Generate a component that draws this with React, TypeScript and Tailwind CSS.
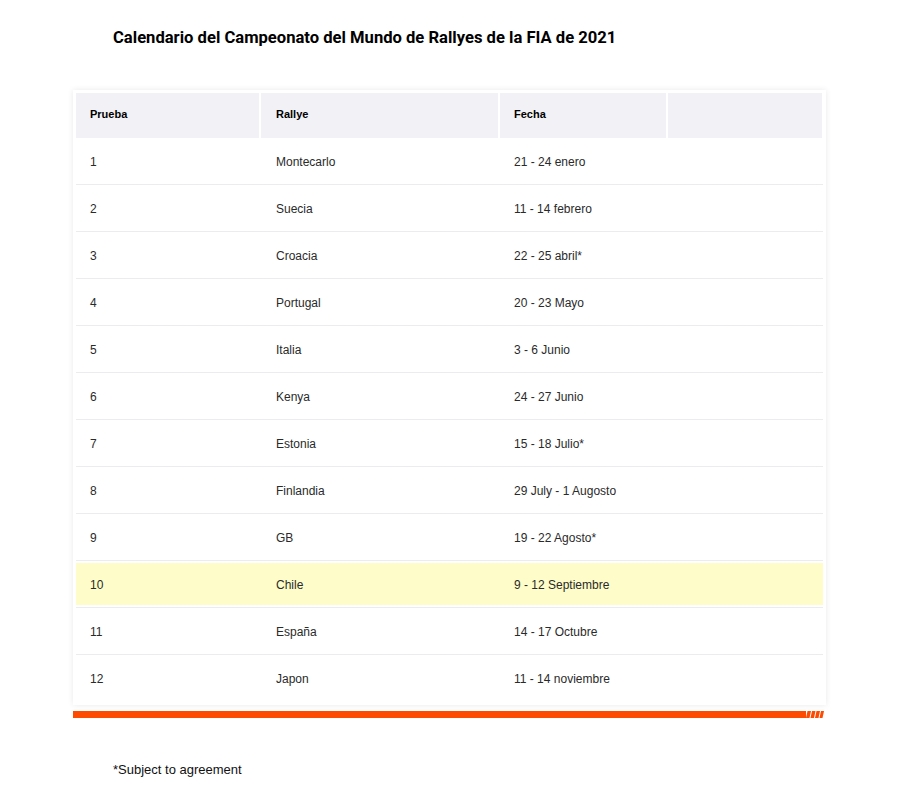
import React from 'react';

interface Row {
  prueba: string;
  rallye: string;
  fecha: string;
  highlight?: boolean;
}

const rows: Row[] = [
  { prueba: '1', rallye: 'Montecarlo', fecha: '21 - 24 enero' },
  { prueba: '2', rallye: 'Suecia', fecha: '11 - 14 febrero' },
  { prueba: '3', rallye: 'Croacia', fecha: '22 - 25 abril*' },
  { prueba: '4', rallye: 'Portugal', fecha: '20 - 23 Mayo' },
  { prueba: '5', rallye: 'Italia', fecha: '3 - 6 Junio' },
  { prueba: '6', rallye: 'Kenya', fecha: '24 - 27 Junio' },
  { prueba: '7', rallye: 'Estonia', fecha: '15 - 18 Julio*' },
  { prueba: '8', rallye: 'Finlandia', fecha: '29 July - 1 Augosto' },
  { prueba: '9', rallye: 'GB', fecha: '19 - 22 Agosto*' },
  { prueba: '10', rallye: 'Chile', fecha: '9 - 12 Septiembre', highlight: true },
  { prueba: '11', rallye: 'España', fecha: '14 - 17 Octubre' },
  { prueba: '12', rallye: 'Japon', fecha: '11 - 14 noviembre' },
];

const cols = 'grid grid-cols-[183px_237px_166px_154px] gap-x-[2px]';

const StripeBar: React.FC = () => (
  <div className="flex h-[7px] w-[751px]">
    <div className="h-full w-[733px] bg-[#fd4c02]" />
    <svg width="18" height="7" viewBox="0 0 18 7">
      <polygon points="1.5,0 5,0 3.5,7 0,7" fill="#fd4c02" />
      <polygon points="6,0 9.5,0 8,7 4.5,7" fill="#fd4c02" />
      <polygon points="10.5,0 14,0 12.5,7 9,7" fill="#fd4c02" />
      <polygon points="15,0 18,0 16.5,7 13.5,7" fill="#fd4c02" />
    </svg>
  </div>
);

const App: React.FC = () => {
  return (
    <div className="min-h-[790px] w-[900px] bg-white font-['Liberation_Sans',Arial,sans-serif] text-[#2a2a2a]">
      {/* Title */}
      <h1 className="pl-[113px] pt-[28px] font-['Roboto',sans-serif] text-[16.6px] font-bold leading-[20px] text-black">
        Calendario del Campeonato del Mundo de Rallyes de la FIA de 2021
      </h1>

      {/* Table card */}
      <div className="ml-[73px] mt-[42px] w-[753px]">
        <div className="bg-white p-[3px] shadow-[0_0_6px_rgba(0,0,0,0.09)]">
          <div className={`${cols} h-[45px] items-center text-[11px] font-bold text-black`}>
            <div className="flex h-full items-center bg-[#f2f2f6] pb-[3px] pl-[14px]">Prueba</div>
            <div className="flex h-full items-center bg-[#f2f2f6] pb-[3px] pl-[15px]">Rallye</div>
            <div className="flex h-full items-center bg-[#f2f2f6] pb-[3px] pl-[14px]">Fecha</div>
            <div className="h-full bg-[#f2f2f6]" />
          </div>

          {rows.map((row, i) => (
            <div
              key={row.prueba}
              className={`h-[47px] py-[2px] ${i < rows.length - 1 ? 'border-b border-[#ececef]' : ''}`}
            >
              <div
                className={`${cols} h-full items-center pt-[1px] text-[12px] ${
                  row.highlight ? 'bg-[#fefdc9]' : ''
                }`}
              >
                <div className="pl-[14px]">{row.prueba}</div>
                <div className="pl-[15px]">{row.rallye}</div>
                <div className="pl-[14px]">{row.fecha}</div>
                <div />
              </div>
            </div>
          ))}
        </div>
        <div className="mt-[6px]">
          <StripeBar />
        </div>
      </div>

      {/* Footnote */}
      <p className="mt-[42px] pl-[113px] text-[13px] text-[#111]">*Subject to agreement</p>
    </div>
  );
};

export default App;
